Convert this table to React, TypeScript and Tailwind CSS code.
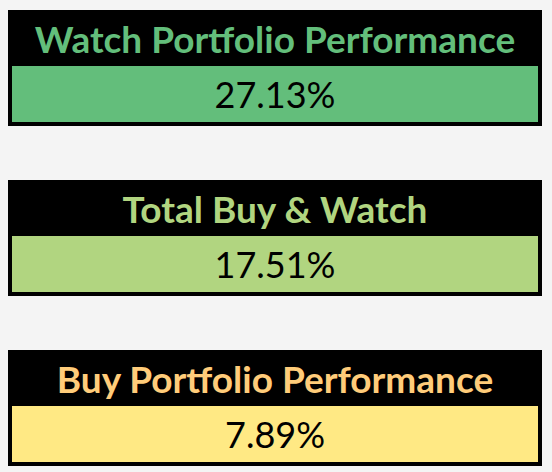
export default function App() {
  const cards = [
    { title: 'Watch Portfolio Performance', value: '27.13%', titleColor: 'text-[#63be7b]', bg: 'bg-[#63be7b]' },
    { title: 'Total Buy & Watch', value: '17.51%', titleColor: 'text-[#b1d580]', bg: 'bg-[#b1d580]' },
    { title: 'Buy Portfolio Performance', value: '7.89%', titleColor: 'text-[#ffcc7a]', bg: 'bg-[#ffe984]' },
  ];

  return (
    <div className="w-[552px] h-[472px] bg-[#f4f4f4] pt-[10px] pl-[8px] flex flex-col gap-[54px] font-['Lato',sans-serif]">
      {cards.map((c) => (
        <div key={c.title} className="w-[534px] bg-black px-[4px] pb-[4px]">
          <div className={`h-[56px] pt-[2px] flex items-center justify-center text-[37px] font-bold ${c.titleColor}`}>
            {c.title}
          </div>
          <div className={`h-[56px] flex items-center justify-center text-[36px] text-black ${c.bg}`}>
            {c.value}
          </div>
        </div>
      ))}
    </div>
  );
}
